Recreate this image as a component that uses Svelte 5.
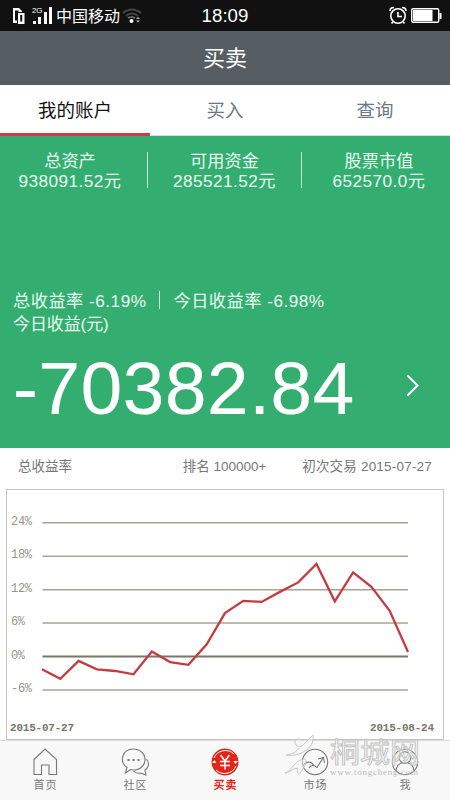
<script>
  let active = $state("我的账户")
  let page = $state("买卖")

  const tabs = ["我的账户", "买入", "查询"]
  const assets = [
    { name: "总资产", value: "938091.52元" },
    { name: "可用资金", value: "285521.52元" },
    { name: "股票市值", value: "652570.0元" }
  ]
  const nav = ["首页", "社区", "买卖", "市场", "我"]

  const levels = [24, 18, 12, 6, 0, -6]
  const rates = [-2.3, -4, -0.8, -2.3, -2.6, -3.2, 0.9, -1, -1.5, 2.2, 7.8, 10, 9.8, 11.6, 13.3, 16.6, 9.9, 15.1, 12.5, 8.2, 0.8]

  const y = (v) => 166.5 - v * 5.57
  const line = rates.map((v, i) => `${35 + i * 18.3},${y(v)}`).join(" ")
</script>

<div class="screen">
  <div class="status">
    <div class="signal">
      <svg width="122" height="31" viewBox="0 0 122 31">
        <path d="M13 8h6l3 3v12h-9z" fill="#fff" />
        <path d="M15 10.500h3.500v10H15z" fill="#111" />
        <path d="M17.500 12.500h7.500v12h-7.500z" fill="#fff" stroke="#111" />
        <path d="M21.200 15v6.500" stroke="#111" stroke-width="2" />
        <g fill="#fff">
          <rect x="33" y="21" width="3" height="3" />
          <rect x="38" y="17" width="3" height="7" />
          <rect x="44" y="12" width="3" height="12" />
          <rect x="49" y="7" width="3" height="17" />
          <text x="32" y="12.500" font-size="8" textLength="10.500">2G</text>
          <text x="56" y="22" font-size="16">中国移动</text>
        </g>
      </svg>
      <svg width="20" height="31" viewBox="0 0 20 31">
        <path d="M1 13q9-7 18 0M4 16q6-5 12 0" fill="none" stroke="#444" stroke-width="2" />
        <path d="M6 18q3.500-2 7 0" fill="none" stroke="#777" stroke-width="1.500" />
        <circle cx="9.500" cy="21" r="2" fill="#fff" />
        <path d="M14 19l2-2 2 2zM14 20.500h4l-2 2z" fill="#bbb" />
      </svg>
    </div>
    <span class="time">18:09</span>
    <svg class="battery" width="54" height="31" viewBox="0 0 54 31" fill="none" stroke="#fff">
      <circle cx="10" cy="16" r="7.200" stroke-width="1.600" />
      <path d="M10 12v4.500h4M2 11q0-3.500 4-3.500M18 11q0-3.500-4-3.500M5 22l-1.500 1.500M15 22l1.500 1.500" stroke-width="1.600" />
      <rect x="23.700" y="8.700" width="27" height="13.600" rx="1.500" stroke-width="1.400" />
      <path d="M25 10h19.500v11H25zM51.500 13h2v6h-2z" fill="#fff" stroke="none" />
    </svg>
  </div>

  <header>{page}</header>

  <div class="tabs">
    {#each tabs as tab}
      <button class:active={active === tab} onclick={() => active = tab}>{tab}</button>
    {/each}
  </div>

  <section class="account">
    <div class="assets">
      {#each assets as item}
        <div class="asset">
          <span>{item.name}</span>
          <span class="value">{item.value}</span>
        </div>
      {/each}
    </div>
    <div class="rates">
      <span>总收益率 -6.19%</span>
      <i></i>
      <span>今日收益率 -6.98%</span>
    </div>
    <div class="label">今日收益(元)</div>
    <div class="profit">
      <span class="amount">-70382.84</span>
      <svg width="14" height="24" viewBox="0 0 14 24">
        <path d="M2 2l9.500 9.500L2 21" fill="none" stroke="#fff" stroke-width="2" stroke-linecap="round" />
      </svg>
    </div>
  </section>

  <div class="info">
    <span>总收益率</span>
    <span class="rank">排名 100000+</span>
    <span class="first">初次交易 2015-07-27</span>
  </div>

  <div class="chart">
    <svg width="436" height="248" viewBox="0 0 436 248">
      {#each levels as level}
        <text class="level" x="4" y={y(level) + 2} textLength={`${level}%`.length * 7}>{level}%</text>
        <path d="M35.500 {y(level)}H401" stroke={level === 0 ? "#77776a" : "#a5a497"} stroke-width={level === 0 ? 1.8 : 1.5} />
      {/each}
      <polyline points={line} fill="none" stroke="#c43c40" stroke-width="2.3" />
      <text class="date" x="3" y="241" textLength="64">2015-07-27</text>
      <text class="date" x="363" y="241" textLength="64">2015-08-24</text>
    </svg>
  </div>

  <nav>
    {#each nav as item}
      <button class:selected={page === item} onclick={() => page = item}>
        <svg width="30" height="30" viewBox="0 0 30 30" fill="none" stroke="currentColor" stroke-width="1.100">
          {#if item === "首页"}
            <path d="M4 12.500L15 2l11.500 10.500V27.500H19V18h-7.500v9.500H4z" />
          {:else if item === "社区"}
            <path d="M5.500 26l1.500-5.500C-1 15 2 2 13 2c7 0 12 4.500 12 10.500 0 8-8 12-14.500 10z" />
            <path d="M26.500 12c4 5 1 9.500-1.500 11l1 5c-3.500-1-4-2-6-2q-4 1-6.500-2" />
            <path d="M7.500 13h2M12.500 13h2M17.500 13h2" stroke-width="2" />
          {:else if item === "买卖"}
            <circle cx="15" cy="15" r="13.500" fill="#e1251b" stroke="none" />
            <path d="M4 11C7 3 18 1 24 7M26 19C23 27 12 29 6 23" stroke="#fff" stroke-width="1" />
            <path d="M10.500 8l4.500 6 4.500-6M15 14v8.500M10 14.500h10M10 18.500h10" stroke="#fff" stroke-width="1.500" />
            <path d="M2 16l2.500-3 2 3zM28 14l-2.500 3-2-3z" fill="#fff" stroke="none" />
          {:else if item === "市场"}
            <circle cx="15" cy="15" r="12.700" />
            <path d="M3 18.500c4-4.500 8-4.500 11 0M9 21c2-3 4.500-3.500 8-.5l6-9.500M18 12l5.500-1.500 1 5.500" />
          {:else}
            <circle cx="15" cy="15" r="12.700" />
            <circle cx="15" cy="10.500" r="5.800" />
            <path d="M6 24c.5-5 3-7.500 6-8M24 24c-.5-5-3-7.500-6-8" />
          {/if}
        </svg>
        <span>{item}</span>
      </button>
    {/each}
  </nav>

  <svg class="watermark" width="142" height="46" viewBox="0 0 142 46">
    <g fill="#f6f6f6" fill-opacity=".5" stroke="#c3c3c3" stroke-width=".9">
      <path d="M18 5c-5-3-9 1-6 5 3 3 7 1 9-2L29 0c1 7-2 12-8 16-6 4-13 5-19 4 7-1 10-3 13-7" />
      <path d="M1 38c7-2 9-12 18-14 6 0 2 6-2 13-3 3-5 0-3-4-5 0-7 4-13 5z" />
      <text x="46" y="28" font-size="28" textLength="90" lengthAdjust="spacingAndGlyphs">桐城网</text>
    </g>
    <text class="site" x="46" y="40" textLength="88">www.tongcheng.com</text>
  </svg>
</div>

<style>
  :global(body) {
    margin: 0;
    background: #fff;
  }

  .screen {
    position: relative;
    width: 450px;
    height: 800px;
    overflow: hidden;
    display: flex;
    flex-direction: column;
    font-family: "Liberation Sans", "Noto Sans CJK SC", sans-serif;
  }

  button {
    border: 0;
    padding: 0;
    background: none;
    font-family: inherit;
  }

  .status {
    height: 31px;
    display: grid;
    grid-template-columns: 1fr auto 1fr;
    background: #111;
    color: #fff;
  }

  .signal {
    display: flex;
  }

  .time {
    font-size: 18.7px;
    line-height: 32px;
  }

  .battery {
    justify-self: end;
    margin-right: 8px;
  }

  header {
    height: 54px;
    background: #565e63;
    color: #fff;
    font-size: 22px;
    line-height: 55px;
    text-align: center;
  }

  .tabs {
    height: 51px;
    display: flex;
    background: #fff;
  }

  .tabs button {
    flex: 1;
    box-sizing: border-box;
    border-bottom: 1px solid #d9d9d9;
    padding-bottom: 3px;
    font-size: 18.5px;
    color: #6d7882;
  }

  .tabs .active {
    border-bottom: 3px solid #d53a47;
    padding-bottom: 1px;
    color: #111;
  }

  .account {
    height: 312px;
    display: flex;
    flex-direction: column;
    background: #34ae70;
    color: #e6fbef;
  }

  .assets {
    display: grid;
    grid-template-columns: 147px 154px 149px;
    height: 36px;
    padding: 16px 0 99px;
  }

  .asset {
    display: flex;
    flex-direction: column;
    align-items: center;
    height: 36px;
    box-sizing: border-box;
    padding-right: 7px;
    font-size: 17.2px;
    line-height: 20px;
  }

  .asset + .asset {
    padding-right: 0;
    border-left: 1px solid #c4ead4;
  }

  .asset:last-child {
    padding-left: 6px;
  }

  .asset span {
    position: relative;
    top: -1px;
  }

  .value {
    letter-spacing: .45px;
  }

  .rates {
    display: flex;
    align-items: center;
    height: 25px;
    padding-left: 13px;
    font-size: 17.2px;
    letter-spacing: .5px;
  }

  .rates i {
    width: 1px;
    height: 18px;
    margin: 0 13px;
    background: #d1f0de;
  }

  .label {
    height: 25px;
    padding-left: 13px;
    font-size: 17px;
    letter-spacing: -.1px;
    line-height: 26px;
  }

  .profit {
    display: flex;
    align-items: center;
    justify-content: space-between;
    height: 98px;
    padding: 0 30px 0 13px;
    color: #fff;
  }

  .amount {
    padding-top: 6px;
    font-size: 74.5px;
    letter-spacing: .7px;
    line-height: 98px;
    -webkit-text-stroke: .2px #fff;
  }

  .info {
    display: flex;
    justify-content: space-between;
    height: 41px;
    padding: 0 18px;
    font-size: 13.5px;
    line-height: 38px;
    color: #777;
  }

  .rank {
    margin-left: 75px;
  }

  .first {
    letter-spacing: .2px;
  }

  .chart {
    width: 436px;
    height: 249px;
    margin-left: 6px;
    border: 1px solid #c5c5c1;
  }

  .level, .date {
    font-family: "Liberation Mono", monospace;
  }

  .level {
    font-size: 12px;
    fill: #96968a;
  }

  .date {
    font-size: 11px;
    font-weight: bold;
    fill: #77776a;
  }

  nav {
    height: 60px;
    box-sizing: border-box;
    display: flex;
    border-top: 1px solid #ddd;
    background: #f8f8f8;
  }

  nav button {
    flex: 1;
    display: flex;
    flex-direction: column;
    align-items: center;
    padding-top: 6px;
    color: #777;
  }

  nav span {
    padding-top: 1px;
    padding-left: 1px;
    font-size: 11px;
    letter-spacing: 1px;
    line-height: 15px;
  }

  nav .selected {
    color: #e1251b;
    font-weight: bold;
  }

  .watermark {
    position: absolute;
    left: 284px;
    top: 735px;
    pointer-events: none;
  }

  .site {
    font-family: "Liberation Serif", serif;
    font-size: 9px;
    fill: #bbb;
  }
</style>
